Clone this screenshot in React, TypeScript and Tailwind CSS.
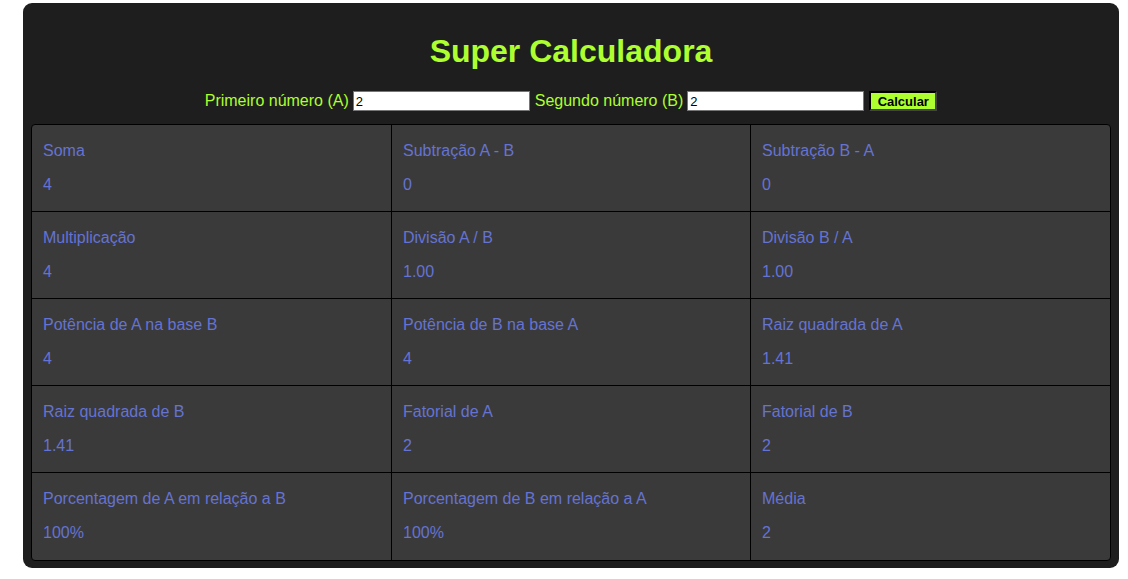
import { useState } from "react";

const fmt = (n: number) => (Number.isInteger(n) ? String(n) : n.toFixed(2));

const fact = (n: number) => {
    let r = 1;
    for (let i = 2; i <= n; i++) r *= i;
    return r;
};

export default function App() {
    const [a, setA] = useState("2");
    const [b, setB] = useState("2");
    const [vals, setVals] = useState({ a: 2, b: 2 });

    const A = vals.a;
    const B = vals.b;

    const results: [string, string][] = [
        ["Soma", fmt(A + B)],
        ["Subtração A - B", fmt(A - B)],
        ["Subtração B - A", fmt(B - A)],
        ["Multiplicação", fmt(A * B)],
        ["Divisão A / B", (A / B).toFixed(2)],
        ["Divisão B / A", (B / A).toFixed(2)],
        ["Potência de A na base B", fmt(Math.pow(A, B))],
        ["Potência de B na base A", fmt(Math.pow(B, A))],
        ["Raiz quadrada de A", fmt(Math.sqrt(A))],
        ["Raiz quadrada de B", fmt(Math.sqrt(B))],
        ["Fatorial de A", fmt(fact(A))],
        ["Fatorial de B", fmt(fact(B))],
        ["Porcentagem de A em relação a B", fmt((A / B) * 100) + "%"],
        ["Porcentagem de B em relação a A", fmt((B / A) * 100) + "%"],
        ["Média", fmt((A + B) / 2)],
    ];

    return (
        <div className="min-h-[579px] bg-white pt-[3px] font-['Liberation_Sans',Arial,sans-serif]">
            <div className="ml-[23px] w-[1096px] rounded-[9px] bg-[#1e1e1e] px-[8px] pt-[30px] pb-[7px]">
                <h1 className="text-center text-[32px] font-bold leading-[37px] text-[#adff2f]">
                    Super Calculadora
                </h1>

                <div className="mt-[21px] flex items-center justify-center text-[16px] leading-[18px] text-[#adff2f]">
                    <label className="mr-[4px]">Primeiro número (A)</label>
                    <input
                        value={a}
                        onChange={(e) => setA(e.target.value)}
                        className="h-[20px] w-[177px] border border-[#767676] bg-white px-[2px] text-[13px] text-black outline-none"
                    />
                    <label className="mr-[4px] ml-[5px]">Segundo número (B)</label>
                    <input
                        value={b}
                        onChange={(e) => setB(e.target.value)}
                        className="h-[20px] w-[177px] border border-[#767676] bg-white px-[2px] text-[13px] text-black outline-none"
                    />
                    <button
                        onClick={() => setVals({ a: Number(a), b: Number(b) })}
                        className="ml-[5px] h-[20px] w-[68px] border-2 border-t-[#000] border-l-[#000] border-r-[#444] border-b-[#444] bg-[#adff2f] text-[13px] font-bold leading-none text-black"
                    >
                        Calcular
                    </button>
                </div>

                <div className="mt-[13px] grid grid-cols-[360px_359px_361px] overflow-hidden rounded-[4px] border border-black bg-[#3a3a3a]">
                    {results.map(([label, value], i) => (
                        <div
                            key={label}
                            className={`h-[87px] px-[11px] pt-[17px] text-[16px] leading-[18px] text-[#6573d2] ${
                                i % 3 !== 2 ? "border-r border-black" : ""
                            } ${i < 12 ? "border-b border-black" : ""}`}
                        >
                            <div>{label}</div>
                            <div className="mt-[16px]">{value}</div>
                        </div>
                    ))}
                </div>
            </div>
        </div>
    );
}
